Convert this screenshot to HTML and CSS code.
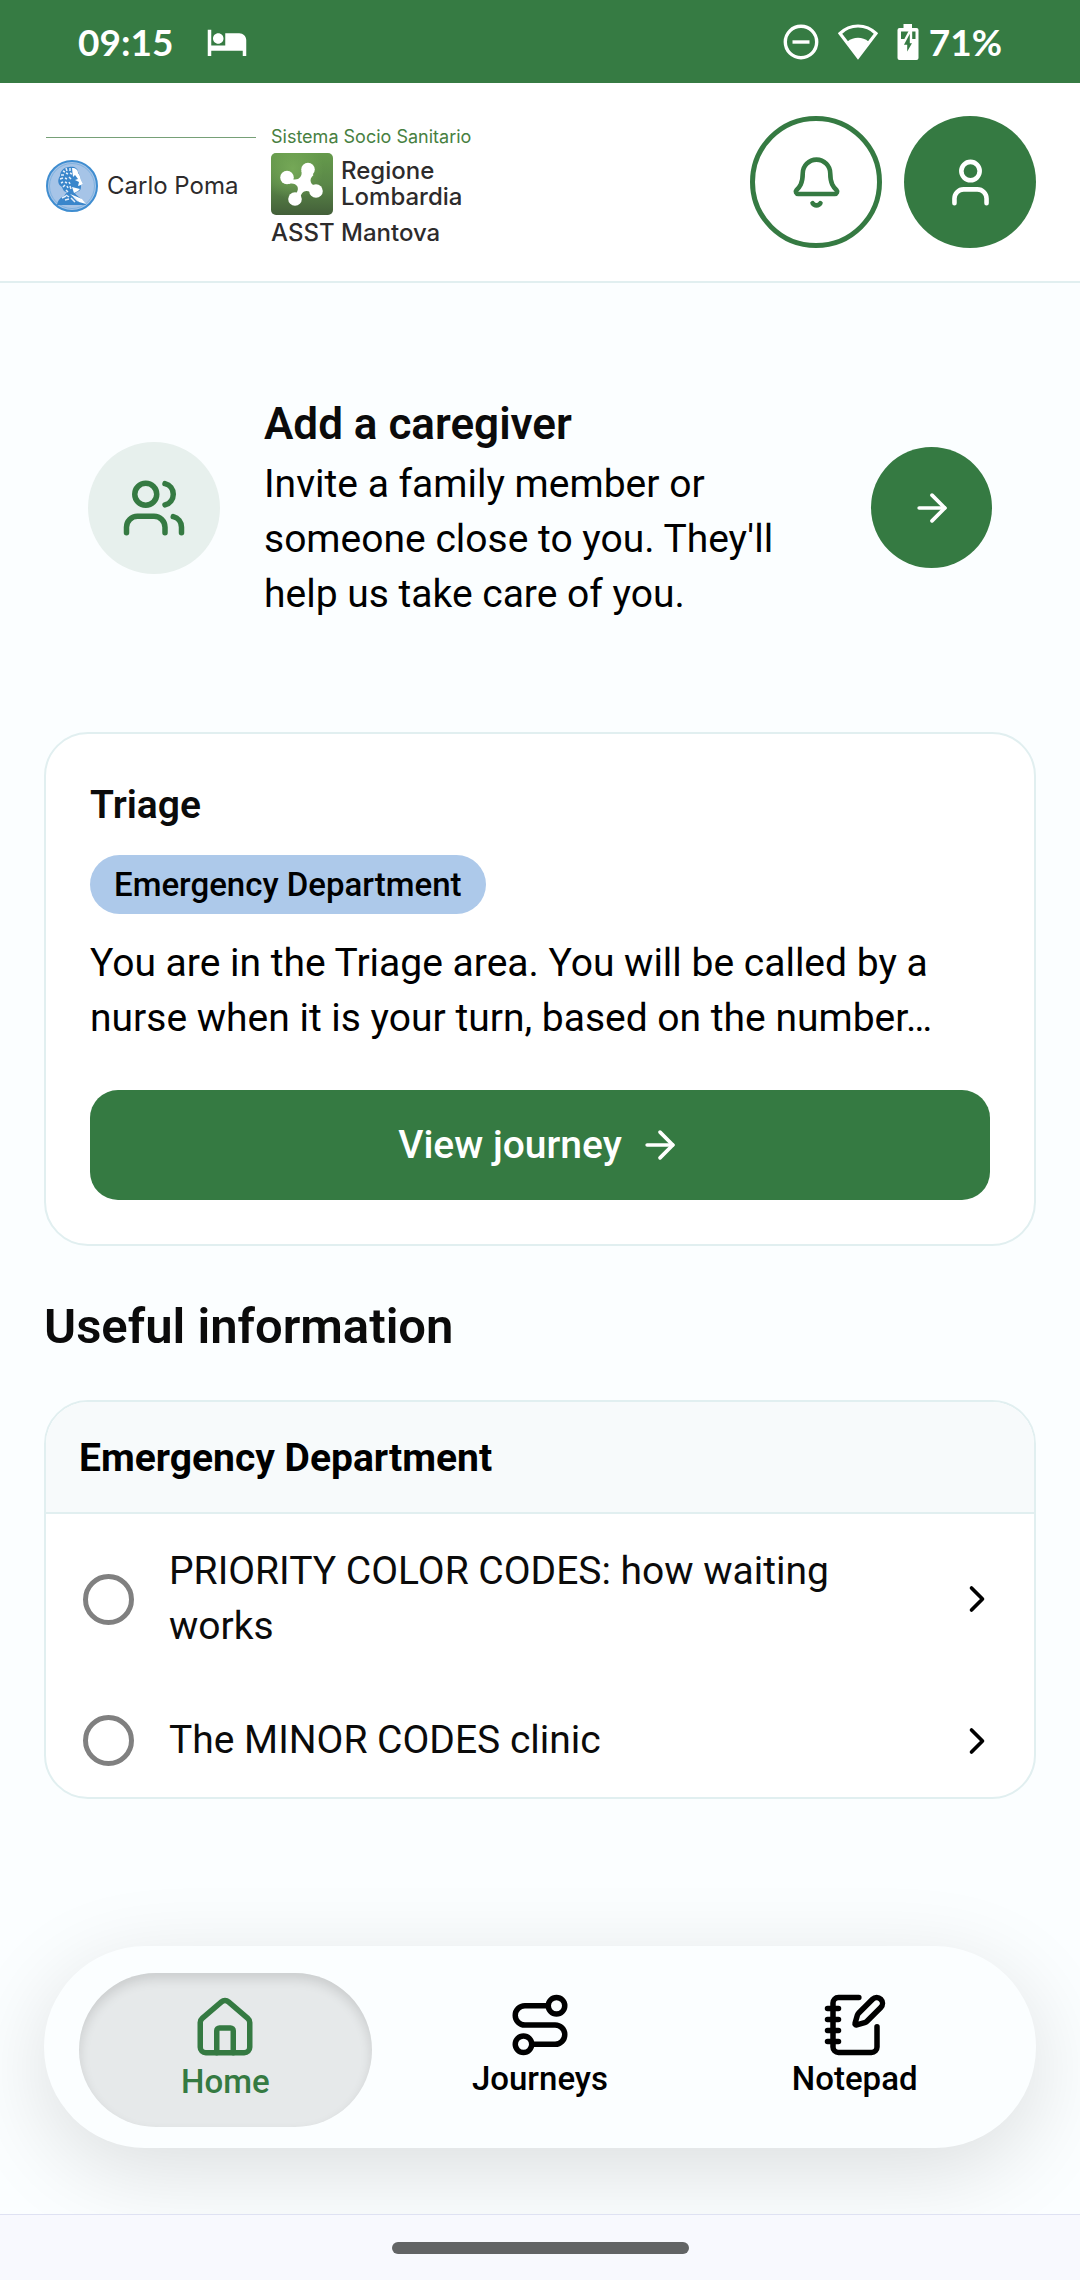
FILE: index.html
```html
<!DOCTYPE html>
<html lang="en">
<head>
<meta charset="utf-8">
<meta name="viewport" content="width=device-width, initial-scale=1">
<title>Home</title>
<link rel="stylesheet" href="styles.css">
</head>
<body>
<div class="app">
  <div class="status-bar">
    <div class="status-group status-left">
      <span>09:15</span>
      <svg class="icon-bed" viewBox="0 0 24 24" fill="currentColor" aria-hidden="true"><path d="M7 13c1.66 0 3-1.34 3-3S8.66 7 7 7s-3 1.34-3 3 1.34 3 3 3zm12-6h-8v7H3V5H1v15h2v-3h18v3h2v-9c0-2.21-1.79-4-4-4z"/></svg>
    </div>
    <div class="status-group status-right">
      <svg width="36" height="36" viewBox="0 0 36 36" fill="none" stroke="currentColor" stroke-width="3.4" aria-hidden="true"><circle cx="18" cy="18" r="15.7"/><path d="M9.5 18h17"/></svg>
      <svg width="42" height="36" viewBox="0 0 42 36" aria-hidden="true"><path d="M3 9.5C13-.5 29-.5 39 9.500L21 33z" fill="none" stroke="currentColor" stroke-width="3.2"/><path d="M10.500 17.500c6-5 15-5 21 0L21 34z" fill="currentColor"/></svg>
      <svg width="22" height="36" viewBox="0 0 22 36" aria-hidden="true"><path d="M6.500 0h8.500v4h4.500a2 2 0 0 1 2 2v28a2 2 0 0 1-2 2H2.500a2 2 0 0 1-2-2V6a2 2 0 0 1 2-2h4z" fill="currentColor"/><path d="M4 7.500h14.500V15H4z" fill="#367b43"/><path d="M14 5L5 22h4v10l8-14h-3z" fill="#367b43" stroke="currentColor" stroke-width="2.400"/></svg>
      <span class="battery-level">71%</span>
    </div>
  </div>

  <header class="header">
    <div class="logo">
      <div class="logo-hospital">
        <div class="logo-name">
          <svg width="52" height="52" viewBox="0 0 52 52" aria-hidden="true">
            <circle cx="26" cy="26" r="25" fill="#a6c4e7" stroke="#3f8dd0" stroke-width="2"/>
            <circle cx="26" cy="26" r="22.500" fill="none" stroke="#7fb2e0" stroke-width="1"/>
            <path d="M11 45c1-5 3-7 7-9l3-4c-3 0-4-2-5-5-4-2-5-7-2-11 0-5 4-9 9-9 5-1 9 1 9 5 2 3 2 5 3 8l2 4-2 1c0 3 0 5-2 6l-4 2c2 4 8 5 11 12z" fill="#3a86cb"/>
            <path d="M26 8c4 0 6 2 6 5 2 2 2 4 3 7l2 4-2 1-3 1 1-4-4-2 3-1-3-4-2 2zM26 27l4 1 4 1-2 2-4 2zM24 34l5 2 7 3 4 5-7-2z" fill="#fff"/>
            <path d="M17 11l2 1m1-4l1 3m3-3l0 3M15 15l3 0m2-2l2 1m2-1l2 1M14 19l3-1m2 0l2 1m2-2l2 2M15 23l2-1m2 0l2 1m2-1l1 2M17 27l2-2m2 1l1 2m2-2l1 3M20 30l2 2m-2 3l3 2m-7 1l4-2m-1 4l4-1m2-1l4 4m-1-5l4 4" fill="none" stroke="#e4eefa" stroke-width="1.500"/>
          </svg>
          <span>Carlo Poma</span>
        </div>
      </div>
      <div class="logo-region">
        <span class="logo-system">Sistema Socio Sanitario</span>
        <div class="logo-mark">
          <svg width="62" height="62" viewBox="0 0 62 62" aria-hidden="true">
            <defs>
              <linearGradient id="leaf" x1="0" y1="0" x2="0" y2="1"><stop offset="0" stop-color="#659a4b"/><stop offset=".5" stop-color="#5a8748"/><stop offset="1" stop-color="#435f39"/></linearGradient>
              <radialGradient id="glow" cx=".35" cy=".25" r=".5"><stop offset="0" stop-color="#75a857"/><stop offset="1" stop-color="#75a857" stop-opacity="0"/></radialGradient>
            </defs>
            <rect width="62" height="62" rx="5" fill="url(#leaf)"/>
            <rect width="62" height="62" rx="5" fill="url(#glow)"/>
            <g fill="#fff"><circle cx="37" cy="16.500" r="6.800"/><circle cx="16" cy="24.500" r="6.800"/><circle cx="45" cy="38" r="6.800"/><circle cx="24" cy="46" r="6.800"/>
            <path d="M30.500 18c1 6-3 10-10 8l-3 5c7-2 12 3 8 9l-7 4 11 4c-1-7 4-14 13-7l5-9c-5 3-12-4-5-10l-8-8z"/></g>
          </svg>
          <div class="logo-place"><span>Regione</span><span>Lombardia</span></div>
        </div>
        <div class="logo-trust"><span>ASST</span><span>Mantova</span></div>
      </div>
    </div>
    <div class="header-actions">
      <button class="round-button round-outline" type="button" aria-label="Notifications">
        <svg class="icon-md" viewBox="0 0 24 24"><path d="M10.268 21a2 2 0 0 0 3.464 0"/><path d="M3.262 15.326A1 1 0 0 0 4 17h16a1 1 0 0 0 .74-1.673C19.41 13.956 18 12.499 18 8A6 6 0 0 0 6 8c0 4.499-1.411 5.956-2.738 7.326"/></svg>
      </button>
      <button class="round-button round-solid" type="button" aria-label="Profile">
        <svg class="icon-md" viewBox="0 0 24 24"><path d="M19 21v-2a4 4 0 0 0-4-4H9a4 4 0 0 0-4 4v2"/><circle cx="12" cy="7" r="4"/></svg>
      </button>
    </div>
  </header>

  <main class="main">
    <section class="caregiver">
      <div class="caregiver-badge">
        <svg class="icon-lg" viewBox="0 0 24 24" aria-hidden="true"><path d="M16 21v-2a4 4 0 0 0-4-4H6a4 4 0 0 0-4 4v2"/><circle cx="9" cy="7" r="4"/><path d="M22 21v-2a4 4 0 0 0-3-3.870"/><path d="M16 3.130a4 4 0 0 1 0 7.750"/></svg>
      </div>
      <div class="caregiver-text">
        <h2>Add a caregiver</h2>
        <p>Invite a family member or someone close to you. They'll help us take care of you.</p>
      </div>
      <button class="caregiver-go" type="button" aria-label="Add a caregiver">
        <svg class="icon-sm" viewBox="0 0 24 24"><path d="M5 12h14"/><path d="m12 5 7 7-7 7"/></svg>
      </button>
    </section>

    <section class="card journey">
      <h3>Triage</h3>
      <span class="chip">Emergency Department</span>
      <p>You are in the Triage area. You will be called by a nurse when it is your turn, based on the number…</p>
      <button class="primary-button" type="button">
        View journey
        <svg class="icon-sm" viewBox="0 0 24 24" aria-hidden="true"><path d="M5 12h14"/><path d="m12 5 7 7-7 7"/></svg>
      </button>
    </section>

    <h2 class="section-title">Useful information</h2>

    <section class="card info">
      <h3 class="info-header">Emergency Department</h3>
      <ul class="info-list">
        <li class="info-row">
          <input type="radio" id="topic-codes" name="topic-codes">
          <label for="topic-codes">PRIORITY COLOR CODES: how waiting works</label>
          <a href="#codes" aria-label="Open PRIORITY COLOR CODES"><svg class="icon-sm" viewBox="0 0 24 24"><path d="m9 18 6-6-6-6"/></svg></a>
        </li>
        <li class="info-row">
          <input type="radio" id="topic-clinic" name="topic-clinic">
          <label for="topic-clinic">The MINOR CODES clinic</label>
          <a href="#clinic" aria-label="Open The MINOR CODES clinic"><svg class="icon-sm" viewBox="0 0 24 24"><path d="m9 18 6-6-6-6"/></svg></a>
        </li>
      </ul>
    </section>
  </main>

  <nav class="tabs">
    <a class="tab tab-active" href="#home" aria-current="page">
      <svg class="icon-lg" viewBox="0 0 24 24" aria-hidden="true"><path d="M15 21v-8a1 1 0 0 0-1-1h-4a1 1 0 0 0-1 1v8"/><path d="M3 10a2 2 0 0 1 .709-1.528l7-5.999a2 2 0 0 1 2.582 0l7 5.999A2 2 0 0 1 21 10v9a2 2 0 0 1-2 2H5a2 2 0 0 1-2-2z"/></svg>
      Home
    </a>
    <a class="tab" href="#journeys">
      <svg class="icon-lg" viewBox="0 0 24 24" aria-hidden="true"><circle cx="6" cy="19" r="3"/><path d="M9 19h8.500a3.500 3.500 0 0 0 0-7h-11a3.500 3.500 0 0 1 0-7H15"/><circle cx="18" cy="5" r="3"/></svg>
      Journeys
    </a>
    <a class="tab" href="#notepad">
      <svg class="icon-lg" viewBox="0 0 24 24" aria-hidden="true"><path d="M13.400 2H6a2 2 0 0 0-2 2v16a2 2 0 0 0 2 2h12a2 2 0 0 0 2-2v-7.400"/><path d="M2 6h4M2 10h4M2 14h4M2 18h4"/><path d="M21.378 5.626a1 1 0 1 0-3.004-3.004l-5.010 5.012a2 2 0 0 0-.506.854l-.837 2.870a.5.5 0 0 0 .620.620l2.870-.837a2 2 0 0 0 .854-.506z"/></svg>
      Notepad
    </a>
  </nav>

  <div class="system-bar"><div class="handle"></div></div>
</div>
</body>
</html>
```
FILE: styles.css
```css
:root {
  --green: #357a42;
  --line: #e1eff0;
  --page: #fbfeff;
}

* {
  box-sizing: border-box;
}

body {
  margin: 0;
  background: var(--page);
  color: #000;
  font-family: Roboto, sans-serif;
  font-size: 39px;
  line-height: 55px;
}

h2, h3, p, ul {
  margin: 0;
  padding: 0;
}

button {
  border: 0;
  padding: 0;
  font: inherit;
  cursor: pointer;
}

a {
  color: inherit;
  text-decoration: none;
}

svg {
  display: block;
  flex: none;
}

.icon-sm, .icon-md, .icon-lg {
  fill: none;
  stroke: currentColor;
  stroke-width: 2;
  stroke-linecap: round;
  stroke-linejoin: round;
}

.icon-sm { width: 44px; height: 44px; }
.icon-md { width: 55px; height: 55px; }
.icon-lg { width: 66px; height: 66px; }

.app {
  display: flex;
  flex-direction: column;
  min-height: 100vh;
}

/* Status bar */
.status-bar {
  display: flex;
  align-items: center;
  justify-content: space-between;
  height: 83px;
  padding: 0 78px;
  background: #367b43;
  color: #fff;
  font-family: Lato, sans-serif;
  font-size: 37px;
  font-weight: 700;
}

.status-group {
  display: flex;
  align-items: center;
}

.status-left { gap: 33px; }
.status-right { gap: 18px; }

.icon-bed {
  width: 42px;
  height: 42px;
}

.battery-level {
  margin-left: -8px;
}

/* Header */
.header {
  display: flex;
  align-items: center;
  justify-content: space-between;
  padding: 33px 44px;
  border-bottom: 2px solid var(--line);
  background: #fff;
}

.logo {
  display: flex;
  align-self: flex-end;
  gap: 15px;
  padding-left: 2px;
  color: #2d2b2c;
  font-family: Inter, sans-serif;
  font-size: 24px;
  line-height: 26px;
}

.logo-hospital {
  width: 210px;
  padding-top: 11px;
}

.logo-name {
  display: flex;
  align-items: center;
  gap: 9px;
  padding-top: 22px;
  border-top: 1px solid #76a077;
  white-space: nowrap;
}

.logo-system {
  display: block;
  margin-bottom: 5px;
  color: #47803f;
  font-size: 18px;
  line-height: 22px;
}

.logo-mark {
  display: flex;
  align-items: center;
  gap: 8px;
}

.logo-place {
  display: flex;
  flex-direction: column;
}

.logo-trust {
  display: grid;
  grid-template-columns: 62px auto;
  gap: 8px;
  padding-top: 2px;
  line-height: 31px;
}

.logo-place, .logo-trust {
  font-weight: 500;
}

.header-actions {
  display: flex;
  gap: 22px;
}

.round-button {
  display: grid;
  place-items: center;
  width: 132px;
  height: 132px;
  border-radius: 50%;
}

.round-outline {
  border: 5px solid var(--green);
  background: #fff;
  color: var(--green);
}

.round-solid {
  background: var(--green);
  color: #fff;
}

/* Page content */
.main {
  padding: 0 44px 110px;
}

.caregiver {
  display: flex;
  align-items: center;
  gap: 44px;
  padding: 110px 44px;
}

.caregiver-badge {
  display: grid;
  flex: none;
  place-items: center;
  width: 132px;
  height: 132px;
  border-radius: 50%;
  background: #e7f0ed;
  color: var(--green);
}

.caregiver-text {
  flex: 1;
}

.caregiver-text h2 {
  margin-bottom: 2px;
  color: #0b0b0b;
  font-size: 44px;
  font-weight: 600;
  line-height: 62px;
}

.caregiver-go {
  display: grid;
  flex: none;
  place-items: center;
  width: 121px;
  height: 121px;
  border-radius: 50%;
  background: var(--green);
  color: #fff;
}

.card {
  border: 2px solid var(--line);
  border-radius: 44px;
  background: #fff;
}

.journey {
  display: flex;
  flex-direction: column;
  align-items: flex-start;
  padding: 44px;
}

.journey h3 {
  color: #0b0b0b;
  font-size: 39px;
  font-weight: 600;
}

.chip {
  margin: 22px 0;
  padding: 0 24px;
  border-radius: 30px;
  background: #adc9ea;
  font-size: 33px;
  font-weight: 500;
  line-height: 59px;
}

.primary-button {
  display: flex;
  align-items: center;
  justify-content: center;
  gap: 16px;
  width: 100%;
  height: 110px;
  margin-top: 44px;
  border-radius: 28px;
  background: var(--green);
  color: #fff;
  font-weight: 500;
}

.section-title {
  margin: 51px 0 43px;
  color: #0b0b0b;
  font-size: 49px;
  font-weight: 600;
  line-height: 60px;
}

.info {
  overflow: hidden;
}

.info-header {
  padding: 29px 33px 26px;
  border-bottom: 2px solid var(--line);
  background: #f7fafb;
  font-size: 39px;
  font-weight: 700;
}

.info-list {
  list-style: none;
}

.info-row {
  display: flex;
  align-items: center;
  gap: 35px;
  padding: 30px 35px 29px 37px;
  color: #0b0b0b;
}

.info-row input {
  flex: none;
  width: 51px;
  height: 51px;
  margin: 0;
  border: 5px solid #808080;
  border-radius: 50%;
  appearance: none;
}

.info-row input:checked {
  border-color: var(--green);
  background: var(--green);
}

.info-row label {
  flex: 1;
}

.info-row a {
  color: #000;
}

/* Bottom tabs */
.tabs {
  display: grid;
  grid-template-columns: repeat(3, 1fr);
  gap: 22px;
  align-items: start;
  margin: auto 44px 66px;
  padding: 27px 35px 21px;
  border-radius: 101px;
  background: var(--page);
  box-shadow: 0 22px 88px rgba(0, 0, 0, 0.13);
}

.tab {
  display: flex;
  flex-direction: column;
  align-items: center;
  padding: 19px 0;
  border-radius: 77px;
  font-size: 33px;
  font-weight: 500;
  line-height: 42px;
}

.tab-active {
  padding: 22px 0 24px;
  background: #e6e9ea;
  box-shadow: inset 0 6px 12px rgba(0, 0, 0, 0.12);
  color: var(--green);
}

.system-bar {
  position: relative;
  display: grid;
  place-items: center;
  height: 66px;
  border-top: 1px solid #dfe2f3;
  background: #f8f9fe;
}

.handle {
  width: 297px;
  height: 12px;
  border-radius: 6px;
  background: #626465;
}
```
